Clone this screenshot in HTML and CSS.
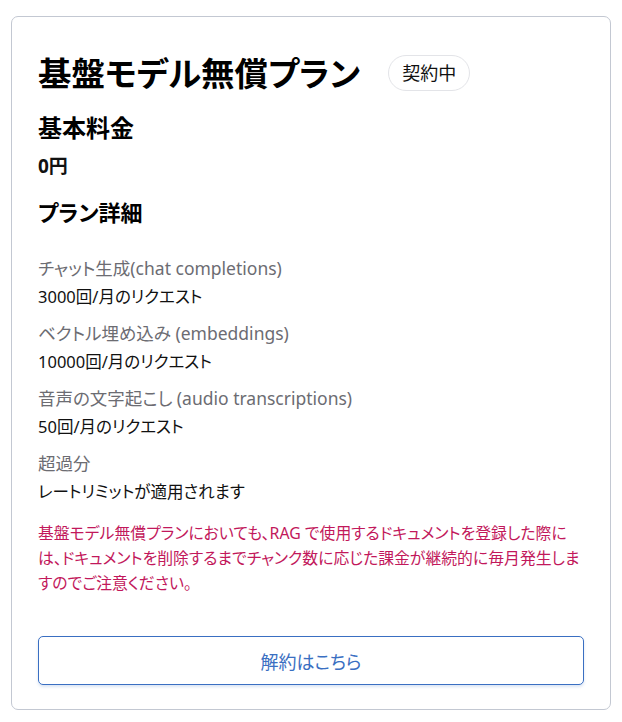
FILE: index.html
```html
<!DOCTYPE html>
<html lang="ja">
<head>
  <meta charset="UTF-8">
  <title>基盤モデル無償プラン</title>
  <link rel="stylesheet" href="styles.css">
</head>
<body>
  <div class="card">
    <div class="plan-head">
      <h1>基盤モデル無償プラン</h1>
      <span class="badge">契約中</span>
    </div>

    <h2>基本料金</h2>
    <p class="price">0円</p>

    <h2 class="details-title">プラン詳細</h2>

    <dl class="details">
      <dt>チャット生成(chat completions)</dt>
      <dd>3000回/月のリクエスト</dd>
      <dt>ベクトル埋め込み (embeddings)</dt>
      <dd>10000回/月のリクエスト</dd>
      <dt>音声の文字起こし (audio transcriptions)</dt>
      <dd>50回/月のリクエスト</dd>
      <dt>超過分</dt>
      <dd>レートリミットが適用されます</dd>
    </dl>

    <p class="notice">基盤モデル無償プランにおいても、RAG で使用するドキュメントを登録した際には、ドキュメントを削除するまでチャンク数に応じた課金が継続的に毎月発生しますのでご注意ください。</p>

    <button class="cancel">解約はこちら</button>
  </div>
</body>
</html>
```

FILE: styles.css
```css
body {
  margin: 0;
  padding: 16px 11px;
  background: #fff;
  font-family: "Noto Sans", "Noto Sans CJK JP", sans-serif;
  font-feature-settings: "palt";
  color: #111;
}
.card {
  width: 600px;
  height: 694px;
  box-sizing: border-box;
  border: 1px solid #c3c8d2;
  border-radius: 7px;
  padding: 30px 26px 24px;
}
.plan-head {
  display: flex;
  align-items: center;
  gap: 28px;
}
h1 {
  margin: 0;
  font-size: 33.5px;
  font-weight: bold;
  line-height: 52px;
  color: #000;
}
.badge {
  border: 1px solid #e3e4e8;
  border-radius: 18px;
  padding: 5px 13px;
  font-size: 18px;
  line-height: 24px;
  color: #111;
}
h2 {
  margin: 14px 0 0;
  font-size: 24px;
  font-weight: bold;
  line-height: 30px;
  color: #000;
}
.price {
  margin: 8px 0 0;
  font-size: 19px;
  font-weight: bold;
  line-height: 30px;
}
h2.details-title {
  margin-top: 16px;
  font-size: 22px;
}
.details {
  margin: 28px 0 0;
}
.details dt {
  font-size: 17.5px;
  line-height: 26px;
  color: #6c6c72;
}
.details dd {
  margin: 3px 0 10px;
  font-size: 16.5px;
  line-height: 26px;
  color: #111;
}
.notice {
  margin: 16px 0 0;
  font-size: 15.85px;
  line-height: 25px;
  color: #c2185b;
}
.cancel {
  display: block;
  width: 100%;
  margin-top: 40px;
  height: 49px;
  background: #fff;
  border: 1px solid #3a6fc2;
  border-radius: 5px;
  box-shadow: 0 2px 3px rgba(58, 111, 194, 0.18);
  font-family: inherit;
  font-feature-settings: "palt";
  font-size: 18px;
  color: #3a6fc2;
  cursor: pointer;
}
```
